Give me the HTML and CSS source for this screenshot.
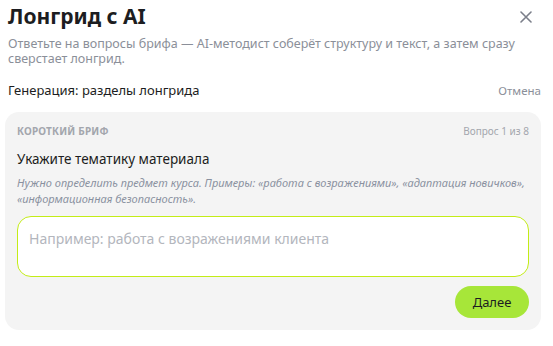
FILE: index.html
```html
<!DOCTYPE html>
<html lang="ru">
<head>
    <meta charset="UTF-8">
    <meta name="viewport" content="width=device-width, initial-scale=1.0">
    <title>Лонгрид с AI</title>
    <link rel="stylesheet" href="styles.css">
</head>
<body>
    <div class="modal">
        <div class="modal-head">
            <h1>Лонгрид с AI</h1>
            <button class="close-btn" aria-label="Закрыть">
                <svg width="12" height="12" viewBox="0 0 12 12">
                    <path d="M1 1L11 11M11 1L1 11" stroke="#7b7f8a" stroke-width="1.6" stroke-linecap="round"/>
                </svg>
            </button>
        </div>
        <p class="lead">Ответьте на вопросы брифа — AI-методист соберёт структуру и текст, а затем сразу сверстает лонгрид.</p>
        <div class="status-row">
            <span class="status">Генерация: разделы лонгрида</span>
            <button class="cancel-btn">Отмена</button>
        </div>
        <div class="card">
            <div class="card-top">
                <span class="eyebrow">Короткий бриф</span>
                <span class="counter">Вопрос 1 из 8</span>
            </div>
            <div class="question">Укажите тематику материала</div>
            <p class="hint">Нужно определить предмет курса. Примеры: «работа с возражениями», «адаптация новичков», «информационная безопасность».</p>
            <textarea class="answer" placeholder="Например: работа с возражениями клиента"></textarea>
            <div class="actions">
                <button class="next-btn">Далее</button>
            </div>
        </div>
    </div>
</body>
</html>
```

FILE: styles.css
```css
body {
    margin: 0;
    background: #fff;
    font-family: 'Noto Sans', sans-serif;
    color: #1c1d21;
}
.modal {
    padding: 3px 12px 0 5px;
}
.modal-head {
    display: flex;
    justify-content: space-between;
    align-items: center;
    padding-left: 3px;
}
h1 {
    margin: 0;
    font-size: 21px;
    font-weight: 700;
    line-height: 26px;
}
.close-btn {
    background: none;
    border: none;
    padding: 0;
    margin-right: 9px;
    margin-top: 2px;
    display: flex;
    cursor: pointer;
}
.lead {
    margin: 7px 0 0;
    padding-left: 3px;
    font-size: 12.5px;
    line-height: 15px;
    color: #8b8f99;
}
.status-row {
    display: flex;
    justify-content: space-between;
    align-items: center;
    margin-top: 15px;
    padding-left: 3px;
}
.status {
    font-size: 13px;
}
.cancel-btn {
    background: none;
    border: none;
    padding: 0;
    font-family: inherit;
    font-size: 11.5px;
    color: #8b8f99;
    cursor: pointer;
}
.card {
    margin-top: 13px;
    background: #f4f4f4;
    border-radius: 14px;
    padding: 12px 12px 12px 12px;
}
.card-top {
    display: flex;
    justify-content: space-between;
    align-items: center;
    font-size: 10px;
    color: #a3a6ad;
}
.eyebrow {
    text-transform: uppercase;
    font-weight: 700;
    letter-spacing: 0.2px;
}
.question {
    margin-top: 12px;
    font-size: 13.5px;
}
.hint {
    margin: 7px 0 0;
    font-size: 11px;
    line-height: 16px;
    font-style: italic;
    color: #8a91a0;
}
.answer {
    display: block;
    box-sizing: border-box;
    width: 100%;
    height: 61px;
    margin-top: 9px;
    padding: 12px 11px;
    border: 1px solid #c3ec17;
    border-radius: 14px;
    background: #fff;
    resize: none;
    font-family: inherit;
    font-size: 14px;
    outline: none;
}
.answer::placeholder {
    color: #b3b6bd;
}
.actions {
    display: flex;
    justify-content: flex-end;
    margin-top: 9px;
}
.next-btn {
    width: 74px;
    height: 32px;
    border: none;
    border-radius: 16px;
    background: #a7e639;
    color: #1c1d21;
    font-family: inherit;
    font-size: 13px;
    cursor: pointer;
}
```
